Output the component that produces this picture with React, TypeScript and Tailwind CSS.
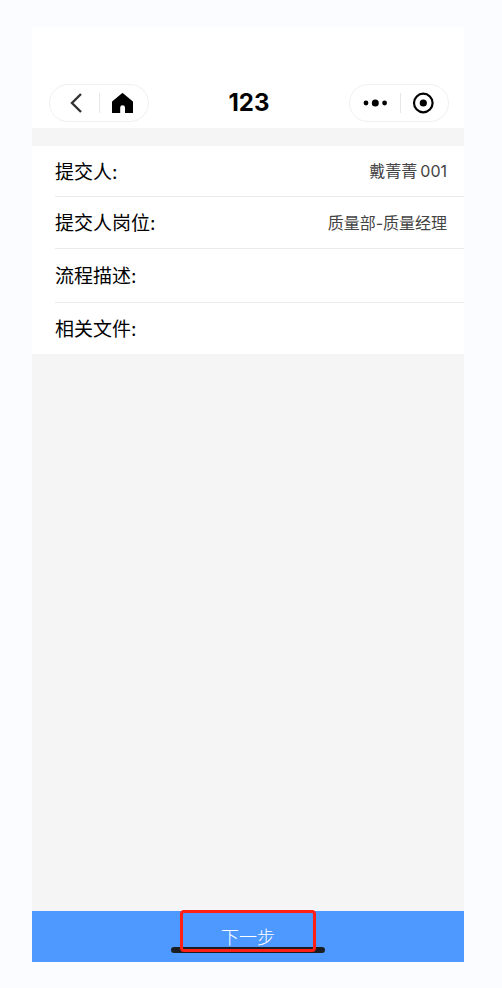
import type { ReactNode } from 'react'

type Field = {
  label: string
  value?: ReactNode
  height: string
}

const fields: Field[] = [
  { label: '提交人:', value: <>戴菁菁<span className="ml-[3px]">001</span></>, height: 'h-[51px]' },
  { label: '提交人岗位:', value: '质量部-质量经理', height: 'h-[52px]' },
  { label: '流程描述:', height: 'h-[54px]' },
  { label: '相关文件:', height: 'h-[51px]' },
]

function Capsule({ children }: { children: ReactNode }) {
  return (
    <div className="flex h-[38px] w-[100px] items-center rounded-full border border-[#f0f0f0]">
      {children}
    </div>
  )
}

function CapsuleButton({ label, children }: { label: string; children: ReactNode }) {
  return (
    <button type="button" aria-label={label} className="flex h-full flex-1 items-center justify-center">
      {children}
    </button>
  )
}

function Divider() {
  return <span className="h-5 w-px bg-[#e8e8e8]" />
}

export default function App() {
  return (
    <div className="flex min-h-screen flex-col bg-[#fbfcff] pt-[27px] pr-[38px] pb-[26px] pl-8 font-['Inter','Noto_Sans_CJK_SC',sans-serif]">
      <main className="flex flex-1 flex-col bg-[#f5f5f5]">
        <header className="flex items-center justify-between bg-white pt-[57px] pr-[15px] pb-[6px] pl-[17px]">
          <Capsule>
            <CapsuleButton label="返回">
              <svg className="h-6 w-6" viewBox="0 0 24 24" fill="none" stroke="#333" strokeWidth="2.4">
                <path d="M19 3 10 12l9 9" />
              </svg>
            </CapsuleButton>
            <Divider />
            <CapsuleButton label="首页">
              <svg className="h-6 w-6" viewBox="0 0 24 24" fill="#000">
                <path d="M10 2.2 Q10.5 1.8 11 2.2 L20.6 10.2 Q21 10.5 21 11 V22 H13 V16.6 a2.4 2.4 0 0 0-4.8 0 V22 H0 V11 Q0 10.5 0.4 10.2 Z" />
              </svg>
            </CapsuleButton>
          </Capsule>
          <h1 className="text-2xl leading-7 font-bold text-black">123</h1>
          <Capsule>
            <CapsuleButton label="更多">
              <svg className="h-6 w-7" viewBox="0 0 28 24" fill="#000">
                <circle cx="6" cy="12" r="2.4" />
                <circle cx="15.3" cy="12" r="3.5" />
                <circle cx="24.6" cy="12" r="2.4" />
              </svg>
            </CapsuleButton>
            <span className="pl-[2px]">
              <span className="block h-5 w-px bg-[#e8e8e8]" />
            </span>
            <CapsuleButton label="关闭">
              <svg className="h-6 w-6" viewBox="0 0 24 24" fill="none">
                <circle cx="11.3" cy="12" r="9.3" stroke="#000" strokeWidth="2.2" />
                <circle cx="11.3" cy="12" r="3.6" fill="#000" />
              </svg>
            </CapsuleButton>
          </Capsule>
        </header>

        <dl className="mt-[18px] bg-white pl-[23px]">
          {fields.map((field) => (
            <div
              key={field.label}
              className={`${field.height} flex items-center justify-between border-b border-[#ebebeb] pr-[17px] last:border-b-0`}
            >
              <dt className="pt-[3px] text-[19px] leading-6 text-black">{field.label}</dt>
              <dd className="text-base leading-6 text-[#444]">{field.value}</dd>
            </div>
          ))}
        </dl>

        <footer className="relative mt-auto">
          <button type="button" className="flex h-[51px] w-full items-center justify-center bg-[#4d99ff] pt-[2px] text-lg font-light text-white">
            下一步
          </button>
          {/* home indicator */}
          <span className="pointer-events-none absolute bottom-[9px] left-1/2 h-[6px] w-[154px] -translate-x-1/2 rounded-full bg-[#1a1d22]" />
          {/* highlight around the next-step button */}
          <span className="pointer-events-none absolute -top-px left-1/2 h-[42px] w-[136px] -translate-x-1/2 rounded-[4px] border-[3px] border-[#ff1f14]" />
        </footer>
      </main>
    </div>
  )
}
